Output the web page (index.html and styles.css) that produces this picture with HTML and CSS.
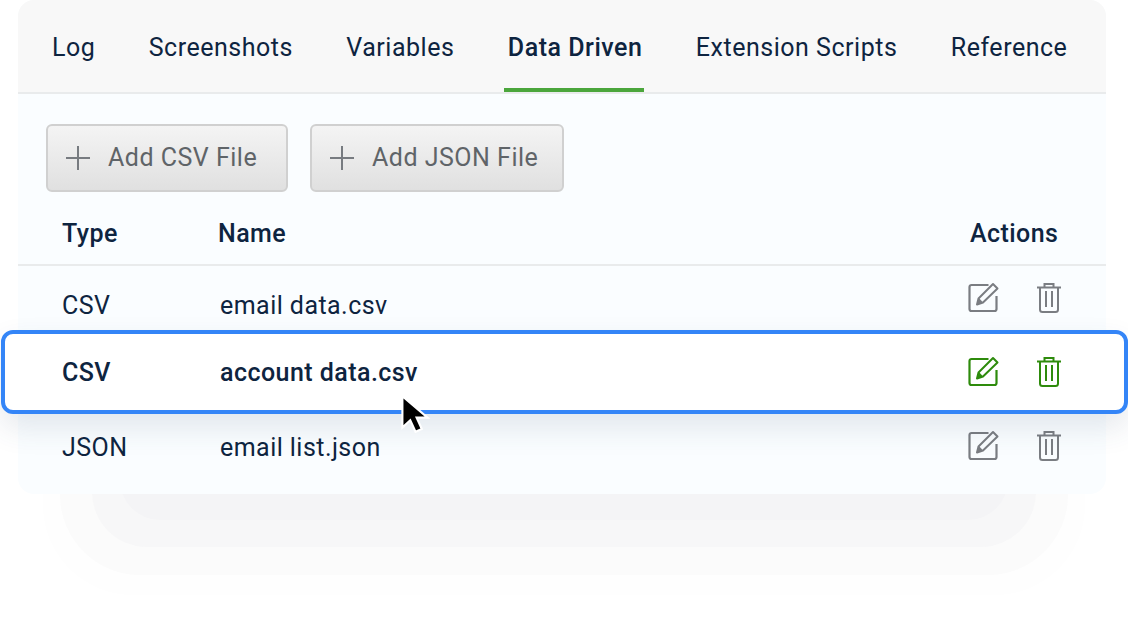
FILE: index.html
```html
<!DOCTYPE html>
<html lang="en">
<head>
<meta charset="utf-8">
<title>Data Driven</title>
<link rel="stylesheet" href="styles.css">
</head>
<body>
<svg class="defs" width="0" height="0" aria-hidden="true">
  <defs>
    <symbol id="edit" viewBox="0 0 32 32">
      <path d="M21.500 3H4.500A2 2 0 0 0 2.500 5V27A2 2 0 0 0 4.500 29H27.500A2 2 0 0 0 29.500 27V14" fill="none" stroke="currentColor" stroke-width="2.200"/>
      <path d="M26 2l4.500 4.500L16 20.500l-6 2 1.500-6z" fill="none" stroke="currentColor" stroke-width="2" stroke-linejoin="round"/>
      <path d="M12 16l4 4.500-6 2z" fill="currentColor"/>
    </symbol>
    <symbol id="trash" viewBox="0 0 32 32">
      <path d="M4 5.500h24" fill="none" stroke="currentColor" stroke-width="2"/>
      <path d="M11.500 5V2h9v3" fill="none" stroke="currentColor" stroke-width="2"/>
      <path d="M7 6v21.500a2.500 2.500 0 0 0 2.500 2.500h13a2.500 2.500 0 0 0 2.500-2.500V6" fill="none" stroke="currentColor" stroke-width="2"/>
      <path d="M13 9v16M19 9v16" fill="none" stroke="currentColor" stroke-width="2"/>
    </symbol>
  </defs>
</svg>
<main class="stage">
  <div class="layer layer-a"></div>
  <div class="layer layer-b"></div>
  <div class="layer layer-c"></div>
  <div class="layer layer-d"></div>
  <section class="card">
    <nav class="tabs">
      <a class="tab">Log</a>
      <a class="tab">Screenshots</a>
      <a class="tab">Variables</a>
      <a class="tab active">Data Driven</a>
      <a class="tab">Extension Scripts</a>
      <a class="tab">Reference</a>
    </nav>
    <div class="toolbar">
      <button class="btn btn-csv"><svg class="plus" viewBox="0 0 26 26"><path d="M13 1v24M1 13h24"/></svg>Add CSV File</button>
      <button class="btn btn-json"><svg class="plus" viewBox="0 0 26 26"><path d="M13 1v24M1 13h24"/></svg>Add JSON File</button>
    </div>
    <div class="row head">
      <span class="c-type">Type</span>
      <span class="c-name">Name</span>
      <span class="c-actions-title">Actions</span>
    </div>
    <div class="row item first">
      <span class="c-type">CSV</span>
      <span class="c-name">email data.csv</span>
      <span class="c-actions"><svg class="ico"><use href="#edit"/></svg><svg class="ico"><use href="#trash"/></svg></span>
    </div>
    <div class="row item selected">
      <span class="c-type">CSV</span>
      <span class="c-name">account data.csv</span>
      <span class="c-actions"><svg class="ico"><use href="#edit"/></svg><svg class="ico"><use href="#trash"/></svg></span>
    </div>
    <div class="row item last">
      <span class="c-type">JSON</span>
      <span class="c-name">email list.json</span>
      <span class="c-actions"><svg class="ico"><use href="#edit"/></svg><svg class="ico"><use href="#trash"/></svg></span>
    </div>
    <svg class="cursor" viewBox="0 0 30 40"><path d="M3 2v30l7.500-7 5 11 6-2.700-5-10.800H27z" fill="#000" stroke="#fff" stroke-width="2"/></svg>
  </section>
</main>
</body>
</html>
```
FILE: styles.css
```css
* { box-sizing: border-box; }
html, body { margin: 0; height: 100%; background: #fff; overflow: hidden; }
body { font-family: Roboto, "Liberation Sans", sans-serif; color: #0e2440; }
.defs { position: absolute; }
.stage { position: relative; width: 1128px; height: 634px; padding-left: 18px; }
.layer { position: absolute; top: 300px; }
.layer-a { left: 43px; right: 43px; height: 295px; background: #fefefe; border-radius: 90px; }
.layer-b { left: 60px; right: 60px; height: 275px; background: #fbfbfb; border-radius: 80px; }
.layer-c { left: 92px; right: 92px; height: 247px; background: #f7f7f8; border-radius: 55px; }
.layer-d { left: 120px; right: 120px; height: 220px; background: #f4f4f6; border-radius: 40px; }
.card { position: relative; width: 1088px; height: 494px; background: #fafdff; border-radius: 16px; }
.tabs { height: 94px; display: flex; gap: 45.400px; padding-left: 30px; background: #f8f8f8; border-bottom: 2px solid #e9ebec; border-radius: 16px 16px 0 0; }
.tab { height: 92px; padding: 32px 4px 0; font-size: 25px; line-height: 32px; letter-spacing: .52px; white-space: nowrap; }
.tab.active { font-weight: 500; padding-right: 2px; margin-right: 2px; border-bottom: 4px solid #4ba63c; }
.toolbar { display: flex; gap: 22px; padding: 30px 0 0 28px; }
.btn { display: flex; align-items: center; height: 68px; padding: 0 0 0 17px; font: 400 25px/32px Roboto, sans-serif; letter-spacing: .5px; color: #5f6468; background: linear-gradient(#f4f4f4, #e0e0e0); border: 2px solid #d0d0d0; border-radius: 6px; }
.btn-csv { width: 242px; }
.btn-json { width: 254px; }
.plus { width: 26px; height: 26px; margin-right: 17px; fill: none; stroke: #777b80; stroke-width: 2; }
.row { display: flex; align-items: center; font-size: 25px; line-height: 32px; letter-spacing: .45px; }
.c-type { width: 202px; padding-left: 44px; flex: none; }
.c-name { flex: 1; }
.c-actions-title { width: 136px; flex: none; }
.c-actions { width: 136px; flex: none; display: flex; gap: 33.500px; margin: 0 3px 2px 0; color: #7a7d82; }
.ico { width: 32px; height: 32px; flex: none; }
.head { height: 74px; padding-top: 12px; font-weight: 500; border-bottom: 2px solid #e9ebec; }
.head .c-name { margin-left: -2px; }
.first { height: 65px; }
.first .c-type, .first .c-name { padding-top: 15px; }
.selected { height: 84px; width: 1127px; margin: -1px 0 -1px -17px; padding: 2px 18px 0 17px; background: #fff; border: 4px solid #3485f7; border-radius: 12px; font-weight: 500; position: relative; box-shadow: 0 14px 30px rgba(50, 70, 110, .12); }
.selected .c-type { margin-left: -4px; }
.selected .c-actions { color: #2e8b0c; }
.last { height: 68px; padding-top: 1px; }
.last .c-actions { margin-bottom: 4px; }
.cursor { position: absolute; left: 381px; top: 394px; width: 32px; height: 42px; }
```
